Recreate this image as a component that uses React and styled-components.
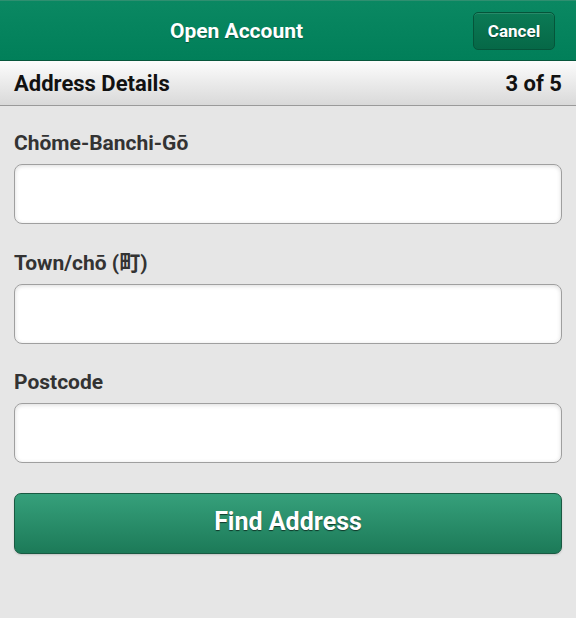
import React from 'react';
import styled, { createGlobalStyle } from 'styled-components';

const GlobalStyle = createGlobalStyle`
  html, body {
    margin: 0;
    padding: 0;
    background: #e6e6e6;
    font-family: Roboto, "Noto Sans CJK JP", sans-serif;
  }
`;

const fields = [
  { id: 'chome', label: 'Chōme-Banchi-Gō' },
  { id: 'town', label: 'Town/chō (町)' },
  { id: 'postcode', label: 'Postcode' }
];

const App = () => {
  return (
    <Page>
      <GlobalStyle />
      <Header>
        <Title>Open Account</Title>
        <CancelButton>Cancel</CancelButton>
      </Header>
      <SubHeader>
        <span>Address Details</span>
        <span>3 of 5</span>
      </SubHeader>
      <Content>
        {fields.map(f => (
          <Field key={f.id}>
            <Label htmlFor={f.id}>{f.label}</Label>
            <Input id={f.id} type="text" />
          </Field>
        ))}
        <FindButton>Find Address</FindButton>
      </Content>
    </Page>
  );
}

const Page = styled.div`
min-height: 618px;
background: #e6e6e6;
`;

const Header = styled.header`
height: 61px;
box-sizing: border-box;
display: flex;
align-items: center;
padding-right: 21px;
background: linear-gradient(#0a8862, #017f59);
border-top: 1px solid #2f8f70;
border-bottom: 1px solid #07563c;
`;

const Title = styled.h1`
flex: 1;
margin: 0;
text-align: center;
color: #fff;
font-size: 21px;
font-weight: 700;
text-shadow: 0 1px 1px rgba(0, 0, 0, 0.35);
`;

const CancelButton = styled.button`
width: 82px;
height: 38px;
border-radius: 5px;
border: 1px solid #05553a;
background: linear-gradient(#0b7a55, #066847);
color: #fff;
font-family: Roboto, sans-serif;
font-size: 17px;
font-weight: 700;
text-shadow: 0 1px 1px rgba(0, 0, 0, 0.4);
box-shadow: inset 0 1px 0 rgba(255, 255, 255, 0.12);
padding: 0;
`;

const SubHeader = styled.div`
height: 45px;
box-sizing: border-box;
display: flex;
align-items: center;
justify-content: space-between;
padding: 0 14px;
background: linear-gradient(#fcfcfc, #d9d9d9);
border-bottom: 1px solid #9a9a9a;
color: #111;
font-size: 22px;
font-weight: 700;
`;

const Content = styled.div`
padding: 24px 14px 0;
display: flex;
flex-direction: column;
`;

const Field = styled.div`
display: flex;
flex-direction: column;
margin-bottom: 25.5px;
`;

const Label = styled.label`
color: #333;
font-size: 21px;
font-weight: 700;
line-height: 26px;
margin-bottom: 8px;
`;

const Input = styled.input`
height: 60px;
box-sizing: border-box;
border: 1px solid #9f9f9f;
border-radius: 8px;
background: #fff;
box-shadow: inset 0 1px 4px rgba(0, 0, 0, 0.15);
outline: none;
font-size: 18px;
padding: 0 12px;
`;

const FindButton = styled.button`
margin-top: 4px;
height: 61px;
padding: 0 0 3px;
border-radius: 7px;
border: 1px solid #195a42;
background: linear-gradient(#36a07b, #1c7a58);
color: #fff;
font-family: Roboto, sans-serif;
font-size: 25px;
font-weight: 700;
text-shadow: 0 1px 1px rgba(0, 0, 0, 0.6);
box-shadow: 0 1px 2px rgba(0, 0, 0, 0.15);
`;

export default App;
